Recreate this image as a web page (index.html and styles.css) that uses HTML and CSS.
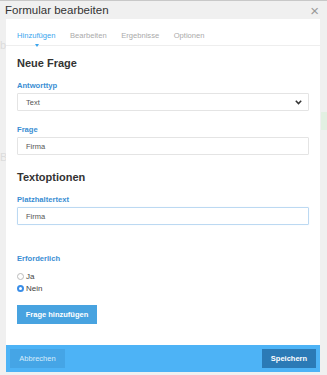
FILE: index.html
```html
<!DOCTYPE html>
<html lang="de">
<head>
    <meta charset="UTF-8">
    <meta name="viewport" content="width=device-width, initial-scale=1.0">
    <title>Formular bearbeiten</title>
    <link rel="stylesheet" href="styles.css">
</head>
<body>
    <div class="backdrop">
        <span class="ghost ghost-b">b</span>
        <span class="ghost ghost-B">B</span>
        <span class="ghost ghost-green"></span>
    </div>

    <div class="modal">
        <div class="modal-header">
            <h1>Formular bearbeiten</h1>
            <span class="close">&times;</span>
        </div>

        <div class="panel">
            <div class="tabs">
                <span class="tab active">Hinzufügen</span>
                <span class="tab">Bearbeiten</span>
                <span class="tab">Ergebnisse</span>
                <span class="tab">Optionen</span>
            </div>

            <div class="panel-body">
                <h2>Neue Frage</h2>

                <label class="field-label">Antworttyp</label>
                <div class="select">
                    <span>Text</span>
                    <svg width="7" height="5" viewBox="0 0 7 5"><path d="M0.8 0.8 L3.5 3.6 L6.2 0.8" fill="none" stroke="#333" stroke-width="1.5"/></svg>
                </div>

                <label class="field-label question">Frage</label>
                <div class="input">Firma</div>

                <h2 class="section">Textoptionen</h2>

                <label class="field-label">Platzhaltertext</label>
                <div class="input focus">Firma</div>

                <label class="field-label required">Erforderlich</label>
                <div class="radio-row first"><span class="radio"></span>Ja</div>
                <div class="radio-row"><span class="radio checked"></span>Nein</div>

                <button class="btn-add">Frage hinzufügen</button>
            </div>
        </div>

        <div class="modal-footer">
            <button class="btn-cancel">Abbrechen</button>
            <button class="btn-save">Speichern</button>
        </div>
    </div>
</body>
</html>
```

FILE: styles.css
```css
body, html {
    margin: 0;
    padding: 0;
    width: 327px;
    height: 375px;
    overflow: hidden;
    font-family: 'Liberation Sans', Arial, Helvetica, sans-serif;
    background-color: #f0f0f0;
}
.backdrop {
    position: absolute;
    inset: 0;
}
.ghost {
    position: absolute;
    color: #dcdcdc;
    font-size: 11px;
}
.ghost-b {
    left: 0;
    top: 39px;
}
.ghost-B {
    left: 0;
    top: 151px;
}
.ghost-green {
    left: 321px;
    top: 112px;
    width: 6px;
    height: 18px;
    background-color: #e2f0e2;
}
.modal {
    position: relative;
    height: 375px;
    display: flex;
    flex-direction: column;
    border-top: 1px solid #c8c8c8;
    box-sizing: border-box;
}
.modal-header {
    height: 18px;
    display: flex;
    justify-content: space-between;
    align-items: center;
    padding: 0 8px 0 5px;
}
.modal-header h1 {
    margin: 0;
    font-size: 11.5px;
    font-weight: normal;
    color: #333;
}
.close {
    color: #999;
    font-size: 15px;
    line-height: 1;
}
.panel {
    margin: 0 7px 0 6px;
    background-color: #fff;
    height: 326px;
    display: flex;
    flex-direction: column;
}
.tabs {
    display: flex;
    gap: 14.5px;
    padding: 12px 11px 0;
    height: 14px;
    border-bottom: 1px solid #eeeeee;
}
.tab {
    font-size: 7.6px;
    color: #aaa;
    position: relative;
}
.tab.active {
    color: #3aa5ee;
}
.tab.active::after {
    content: "";
    position: absolute;
    left: 18px;
    top: 13px;
    border-left: 2.5px solid transparent;
    border-right: 2.5px solid transparent;
    border-top: 3px solid #3aa5ee;
}
.panel-body {
    padding: 0 11px;
    display: flex;
    flex-direction: column;
    align-items: flex-start;
}
h2 {
    margin: 11px 0 0;
    font-size: 11px;
    font-weight: bold;
    color: #333;
    line-height: 13px;
}
h2.section {
    margin-top: 16px;
}
.field-label {
    margin-top: 11px;
    margin-bottom: 2px;
    font-size: 7.6px;
    font-weight: bold;
    color: #3a8ed3;
    line-height: 10px;
}
.field-label.question {
    margin-top: 14px;
}
.field-label.required {
    margin-top: 29px;
}
.select, .input {
    box-sizing: border-box;
    width: 292px;
    height: 18px;
    border: 1px solid #e4e4e4;
    border-radius: 1px;
    padding: 0 6px 0 8px;
    font-size: 7.5px;
    color: #555;
    display: flex;
    align-items: center;
    justify-content: space-between;
}
.input.focus {
    border-color: #bcd9f2;
    box-shadow: 0 0 1px #cfe5f7;
}
.radio-row {
    display: flex;
    align-items: center;
    gap: 2px;
    font-size: 8px;
    color: #444;
    margin-top: 2px;
    height: 10px;
}
.radio-row.first {
    margin-top: 5px;
}
.radio {
    box-sizing: border-box;
    width: 7px;
    height: 7px;
    border-radius: 50%;
    border: 1px solid #bbb;
    background: #fff;
}
.radio.checked {
    border: 2px solid #3a8ee8;
    background: #fff;
}
.btn-add {
    margin-top: 12px;
    width: 80px;
    height: 19px;
    border: none;
    background-color: #48a3e0;
    color: #fff;
    font-family: inherit;
    font-size: 7.5px;
    font-weight: bold;
    padding: 0;
}
.modal-footer {
    margin: 0 7px 0 6px;
    height: 27px;
    background-color: #4db3f6;
    display: flex;
    justify-content: space-between;
    align-items: center;
    padding: 0 4px;
}
.modal-footer button {
    height: 19px;
    border: none;
    font-family: inherit;
    font-size: 7.5px;
    padding: 0;
}
.btn-cancel {
    width: 55px;
    background-color: #45a5e6;
    color: #d8ecfb;
}
.btn-save {
    width: 54px;
    background-color: #2b7ab6;
    color: #fff;
    font-weight: bold;
}
```
